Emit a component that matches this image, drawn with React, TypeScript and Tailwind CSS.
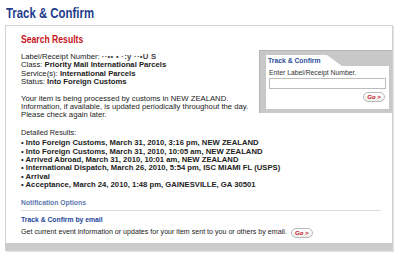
import React from "react";

const SANS = "font-['Liberation_Sans',Arial,Helvetica,sans-serif]";

function GoButton() {
  return (
    <span className="inline-flex h-[10px] w-[22px] items-center justify-center rounded-full border border-[#b9b9b9] bg-gradient-to-b from-white to-[#ececec] text-[6px] font-bold italic leading-none text-[#c4161c]">
      Go &gt;
    </span>
  );
}

const EVENTS = [
  "Into Foreign Customs, March 31, 2010, 3:16 pm, NEW ZEALAND",
  "Into Foreign Customs, March 31, 2010, 10:05 am, NEW ZEALAND",
  "Arrived Abroad, March 31, 2010, 10:01 am, NEW ZEALAND",
  "International Dispatch, March 26, 2010, 5:54 pm, ISC MIAMI FL (USPS)",
  "Arrival",
  "Acceptance, March 24, 2010, 1:48 pm, GAINESVILLE, GA 30501",
];

export default function App() {
  return (
    <div className={`h-[257px] w-[400px] overflow-hidden bg-white ${SANS} text-[#222]`}>
      {/* Page title */}
      <div className="h-[25px] pl-[6px] pt-[5px]">
        <h1 className="origin-left scale-x-[0.76] whitespace-nowrap text-[15px] font-bold leading-[15px] text-[#1f3d8c]">
          Track &amp; Confirm
        </h1>
      </div>

      {/* Main box */}
      <div className="ml-[5px] flex h-[226px] w-[388px] flex-col border border-[#d2d2d2] shadow-[1px_1px_0_#e2e2e2]">
        <div className="flex flex-1 flex-col">
          <div className="flex">
            {/* Left column */}
            <div className="min-w-0 flex-1 pl-[15px] pt-[8px]">
              <h2 className="origin-left scale-x-[0.82] whitespace-nowrap text-[10.5px] font-bold leading-[11px] text-[#c4161c]">
                Search Results
              </h2>
              <div className="mt-[8px] whitespace-nowrap text-[7.7px] leading-[8.4px]">
                <div>
                  Label/Receipt Number: <b className="tracking-[0.3px] text-[#444]">··•• • ·:y ··•U S</b>
                </div>
                <div>
                  Class: <b>Priority Mail International Parcels</b>
                </div>
                <div>
                  Service(s): <b>International Parcels</b>
                </div>
                <div>
                  Status: <b>Into Foreign Customs</b>
                </div>
              </div>
              <div className="mt-[8px] whitespace-nowrap text-[7.7px] leading-[8.4px]">
                <div>Your item is being processed by customs in NEW ZEALAND.</div>
                <div>Information, if available, is updated periodically throughout the day.</div>
                <div>Please check again later.</div>
              </div>
              <div className="mt-[9px] text-[7.3px] leading-[8.4px]">Detailed Results:</div>
              <ul className="mt-[2px] whitespace-nowrap text-[7.7px] font-bold leading-[8.4px]">
                {EVENTS.map((e) => (
                  <li key={e}>
                    <span className="font-normal">•</span> {e}
                  </li>
                ))}
              </ul>
            </div>

            {/* Side panel */}
            <div className="mt-[24px] h-[63px] w-[133px] shrink-0 border-l border-t border-[#b5b5b5] bg-[#c8c8c8] pb-[4px] pl-[6px] pr-[3px] pt-[4px]">
              <div className="flex h-[11px]">
                <div className="w-[76px] bg-white pl-[2px] [clip-path:polygon(0_0,80%_0,100%_100%,0_100%)]">
                  <span className="block origin-left scale-x-[0.85] whitespace-nowrap text-[8px] font-bold leading-[11px] text-[#2c4f9b]">
                    Track &amp; Confirm
                  </span>
                </div>
              </div>
              <div className="h-[43px] bg-white px-[3px] pt-[3px]">
                <div className="whitespace-nowrap text-[6.8px] leading-[8px] text-[#333]">Enter Label/Receipt Number.</div>
                <div className="mt-[1px] h-[11px] border border-[#bdbdbd] bg-white" />
                <div className="mt-[3px] flex justify-end pr-[1px]">
                  <GoButton />
                </div>
              </div>
            </div>
          </div>

          {/* Notification options */}
          <div className="mt-[9px] pl-[15px] pr-[11px]">
            <div className="border-b border-[#dcdcdc] pb-[3px] text-[6.8px] font-bold leading-[8.4px] text-[#5d78ad]">
              Notification Options
            </div>
            <div className="mt-[5px] text-[6.8px] font-bold leading-[8.4px] text-[#24469a]">
              Track &amp; Confirm by email
            </div>
            <div className="mt-[3px] flex items-center gap-[4px] whitespace-nowrap text-[7.1px] leading-[8.4px]">
              <span>Get current event information or updates for your item sent to you or others by email.</span>
              <GoButton />
            </div>
          </div>
        </div>

        {/* Bottom bar */}
        <div className="h-[7px] bg-[#cbcbcb]" />
      </div>
    </div>
  );
}
